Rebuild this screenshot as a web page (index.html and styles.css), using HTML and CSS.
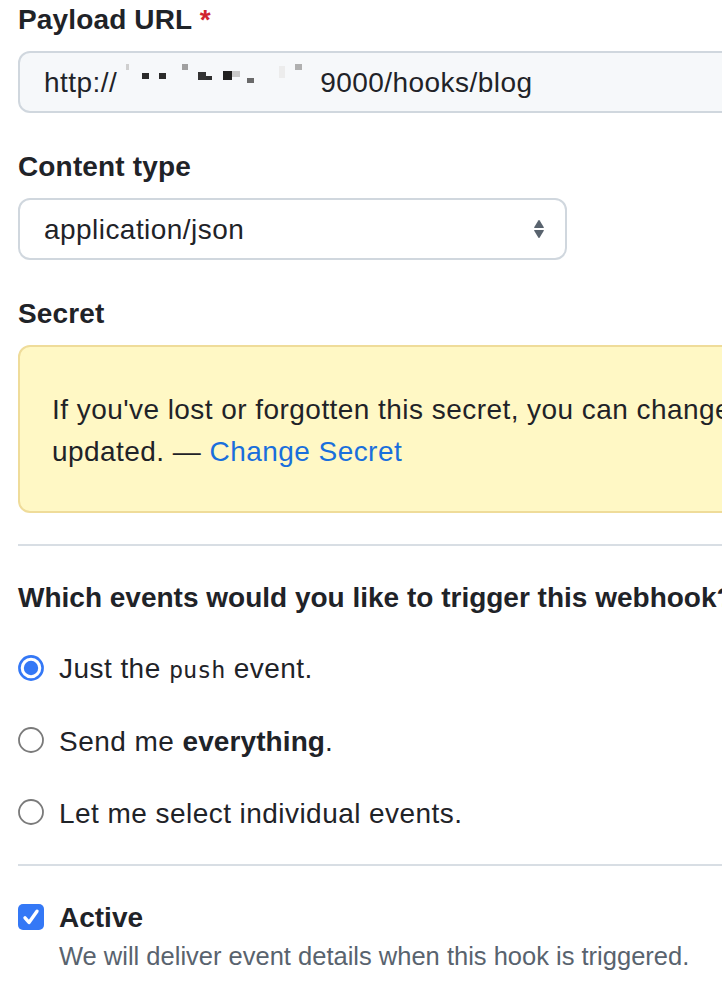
FILE: index.html
```html
<!DOCTYPE html>
<html lang="en">
<head>
<meta charset="utf-8">
<title>Webhook settings</title>
<link rel="stylesheet" href="styles.css">
</head>
<body>
<form class="page">
  <div class="group first">
    <label class="label">Payload URL <span class="req">*</span></label>
    <div class="input">http://<span class="redact"><i class="px a"></i><i class="px b"></i><i class="px c"></i><i class="px d"></i><i class="px e"></i><i class="px f"></i><i class="px g"></i><i class="px h"></i><i class="px i"></i><i class="px j"></i><i class="px k"></i></span>9000/hooks/blog</div>
  </div>

  <div class="group">
    <label class="label">Content type</label>
    <div class="select">
      <span>application/json</span>
      <svg class="arrows" width="12" height="20" viewBox="0 0 12 20" aria-hidden="true">
        <path d="M1.2 8.2 L5.3 1.4 Q6 0.4 6.7 1.4 L10.8 8.2 Q11.2 9 10.3 9 L1.7 9 Q0.8 9 1.2 8.2 Z" fill="#59636e"/>
        <path d="M1.2 11.8 L5.3 18.6 Q6 19.6 6.7 18.6 L10.8 11.8 Q11.2 11 10.3 11 L1.7 11 Q0.8 11 1.2 11.8 Z" fill="#59636e"/>
      </svg>
    </div>
  </div>

  <div class="group">
    <label class="label">Secret</label>
    <div class="flash">
      <p>If you've lost or forgotten this secret, you can change it, but be aware that any integrations using this secret will need to be</p>
      <p>updated. — <a href="#" class="link">Change Secret</a></p>
    </div>
  </div>

  <hr class="rule first-rule">

  <h3 class="heading">Which events would you like to trigger this webhook?</h3>

  <div class="radios">
    <div class="radio-row">
      <svg class="radio" width="26" height="26" viewBox="0 0 26 26" aria-hidden="true">
        <circle cx="13" cy="13" r="11.6" fill="#fff" stroke="#3478f6" stroke-width="2.6"/>
        <circle cx="13" cy="13" r="7.2" fill="#3478f6"/>
      </svg>
      <span class="opt">Just the <code>push</code> event.</span>
    </div>
    <div class="radio-row">
      <svg class="radio" width="26" height="26" viewBox="0 0 26 26" aria-hidden="true">
        <circle cx="13" cy="13" r="12" fill="#fff" stroke="#7a7a7a" stroke-width="1.8"/>
      </svg>
      <span class="opt">Send me <b>everything</b>.</span>
    </div>
    <div class="radio-row">
      <svg class="radio" width="26" height="26" viewBox="0 0 26 26" aria-hidden="true">
        <circle cx="13" cy="13" r="12" fill="#fff" stroke="#7a7a7a" stroke-width="1.8"/>
      </svg>
      <span class="opt">Let me select individual events.</span>
    </div>
  </div>

  <hr class="rule second-rule">

  <div class="check-row">
    <svg class="checkbox" width="26" height="26" viewBox="0 0 26 26" aria-hidden="true">
      <rect x="0" y="0" width="26" height="26" rx="5" fill="#3478f6"/>
      <path d="M7 13.8 L11 18.4 L19 7.2" fill="none" stroke="#fff" stroke-width="3.4" stroke-linecap="round" stroke-linejoin="round"/>
    </svg>
    <div class="check-text">
      <div class="check-title">Active</div>
      <div class="note">We will deliver event details when this hook is triggered.</div>
    </div>
  </div>
</form>
</body>
</html>
```

FILE: styles.css
```css
html, body {
  margin: 0;
  padding: 0;
  background: #ffffff;
  overflow: hidden;
}

body {
  font-family: "Liberation Sans", Arial, sans-serif;
  color: #1f2328;
  font-size: 28px;
}

.page {
  width: 1000px;
  padding: 1px 0 0 18px;
}

.group {
  margin-top: 35px;
}

.group.first {
  margin-top: 0;
}

.label {
  display: block;
  font-weight: bold;
  line-height: 36px;
  padding-top: 1px;
  margin-bottom: 13px;
  letter-spacing: 0.15px;
}

.req {
  color: #d1242f;
}

.input {
  box-sizing: border-box;
  height: 62px;
  width: 900px;
  border: 2px solid #d0d7de;
  border-radius: 12px;
  background: #f6f8fa;
  padding: 2px 0 0 24px;
  display: flex;
  align-items: center;
  white-space: nowrap;
  line-height: 36px;
  letter-spacing: 0.45px;
}

.redact {
  display: inline-flex;
  align-items: flex-start;
  width: 203px;
  height: 36px;
  flex: none;
  align-self: center;
  margin-top: -5px;
}

.px {
  display: block;
  flex: none;
}

.px.a { margin-left: 9px;  margin-top: 1px;  width: 3px; height: 6px; background: #cfcfcf; }
.px.b { margin-left: 13px; margin-top: 10px; width: 7px; height: 6px; background: #2b2b2b; }
.px.c { margin-left: 10px; margin-top: 10px; width: 7px; height: 6px; background: #2b2b2b; }
.px.d { margin-left: 16px; margin-top: 1px;  width: 6px; height: 6px; background: #a0a0a0; }
.px.e { margin-left: 10px; margin-top: 9px;  width: 8px; height: 8px; background: #333333; }
.px.f { margin-left: 0;    margin-top: 13px; width: 6px; height: 4px; background: #2f2f2f; }
.px.g { margin-left: 11px; margin-top: 8px;  width: 9px; height: 9px; background: #202020; }
.px.h { margin-left: 0;    margin-top: 8px;  width: 8px; height: 6px; background: #c9c9c9; }
.px.i { margin-left: 7px;  margin-top: 15px; width: 7px; height: 5px; background: #6a6a6a; }
.px.j { margin-left: 25px; margin-top: 3px;  width: 6px; height: 12px; background: #ececec; }
.px.k { margin-left: 10px; margin-top: 1px;  width: 7px; height: 6px; background: #b0b0b0; }

.select {
  box-sizing: border-box;
  width: 549px;
  height: 62px;
  border: 2px solid #d0d7de;
  border-radius: 12px;
  background: #ffffff;
  padding: 0 20px 0 24px;
  display: flex;
  align-items: center;
  justify-content: space-between;
  line-height: 36px;
  letter-spacing: 0.45px;
}

.select span {
  padding-top: 2px;
}

.arrows {
  display: block;
}

.flash {
  box-sizing: border-box;
  width: 900px;
  border: 2px solid #efdc9a;
  border-radius: 12px;
  background: #fff8c5;
  padding: 42px 32px 38px;
  line-height: 42px;
  white-space: nowrap;
  letter-spacing: 0.45px;
}

.flash p {
  margin: 0;
}

.link {
  color: #1a6fdc;
  text-decoration: none;
}

.rule {
  border: 0;
  height: 2px;
  background: #d8dee4;
  margin: 0;
  width: 900px;
}

.first-rule {
  margin-top: 31px;
}

.heading {
  margin: 33px 0 0 0;
  padding-top: 1px;
  font-size: 28px;
  font-weight: bold;
  line-height: 35px;
  white-space: nowrap;
}

.radios {
  display: flex;
  flex-direction: column;
  gap: 36px;
  margin-top: 35px;
}

.radio-row {
  display: flex;
  align-items: center;
  gap: 15px;
  height: 36px;
}

.opt {
  letter-spacing: 0.45px;
  line-height: 33px;
  padding-top: 3px;
}

.radio {
  display: block;
  flex: none;
}

code {
  font-family: "DejaVu Sans Mono", "Liberation Mono", monospace;
  font-size: 23.5px;
  letter-spacing: 0;
}

b {
  font-weight: bold;
  letter-spacing: 0.1px;
}

.second-rule {
  margin-top: 34px;
}

.check-row {
  display: flex;
  align-items: flex-start;
  gap: 15px;
  margin-top: 33px;
}

.checkbox {
  display: block;
  flex: none;
  margin-top: 5px;
}

.check-title {
  font-weight: bold;
  line-height: 35px;
  padding-top: 1px;
}

.note {
  color: #59636e;
  font-size: 25.5px;
  line-height: 36px;
  padding-top: 3px;
}
```
